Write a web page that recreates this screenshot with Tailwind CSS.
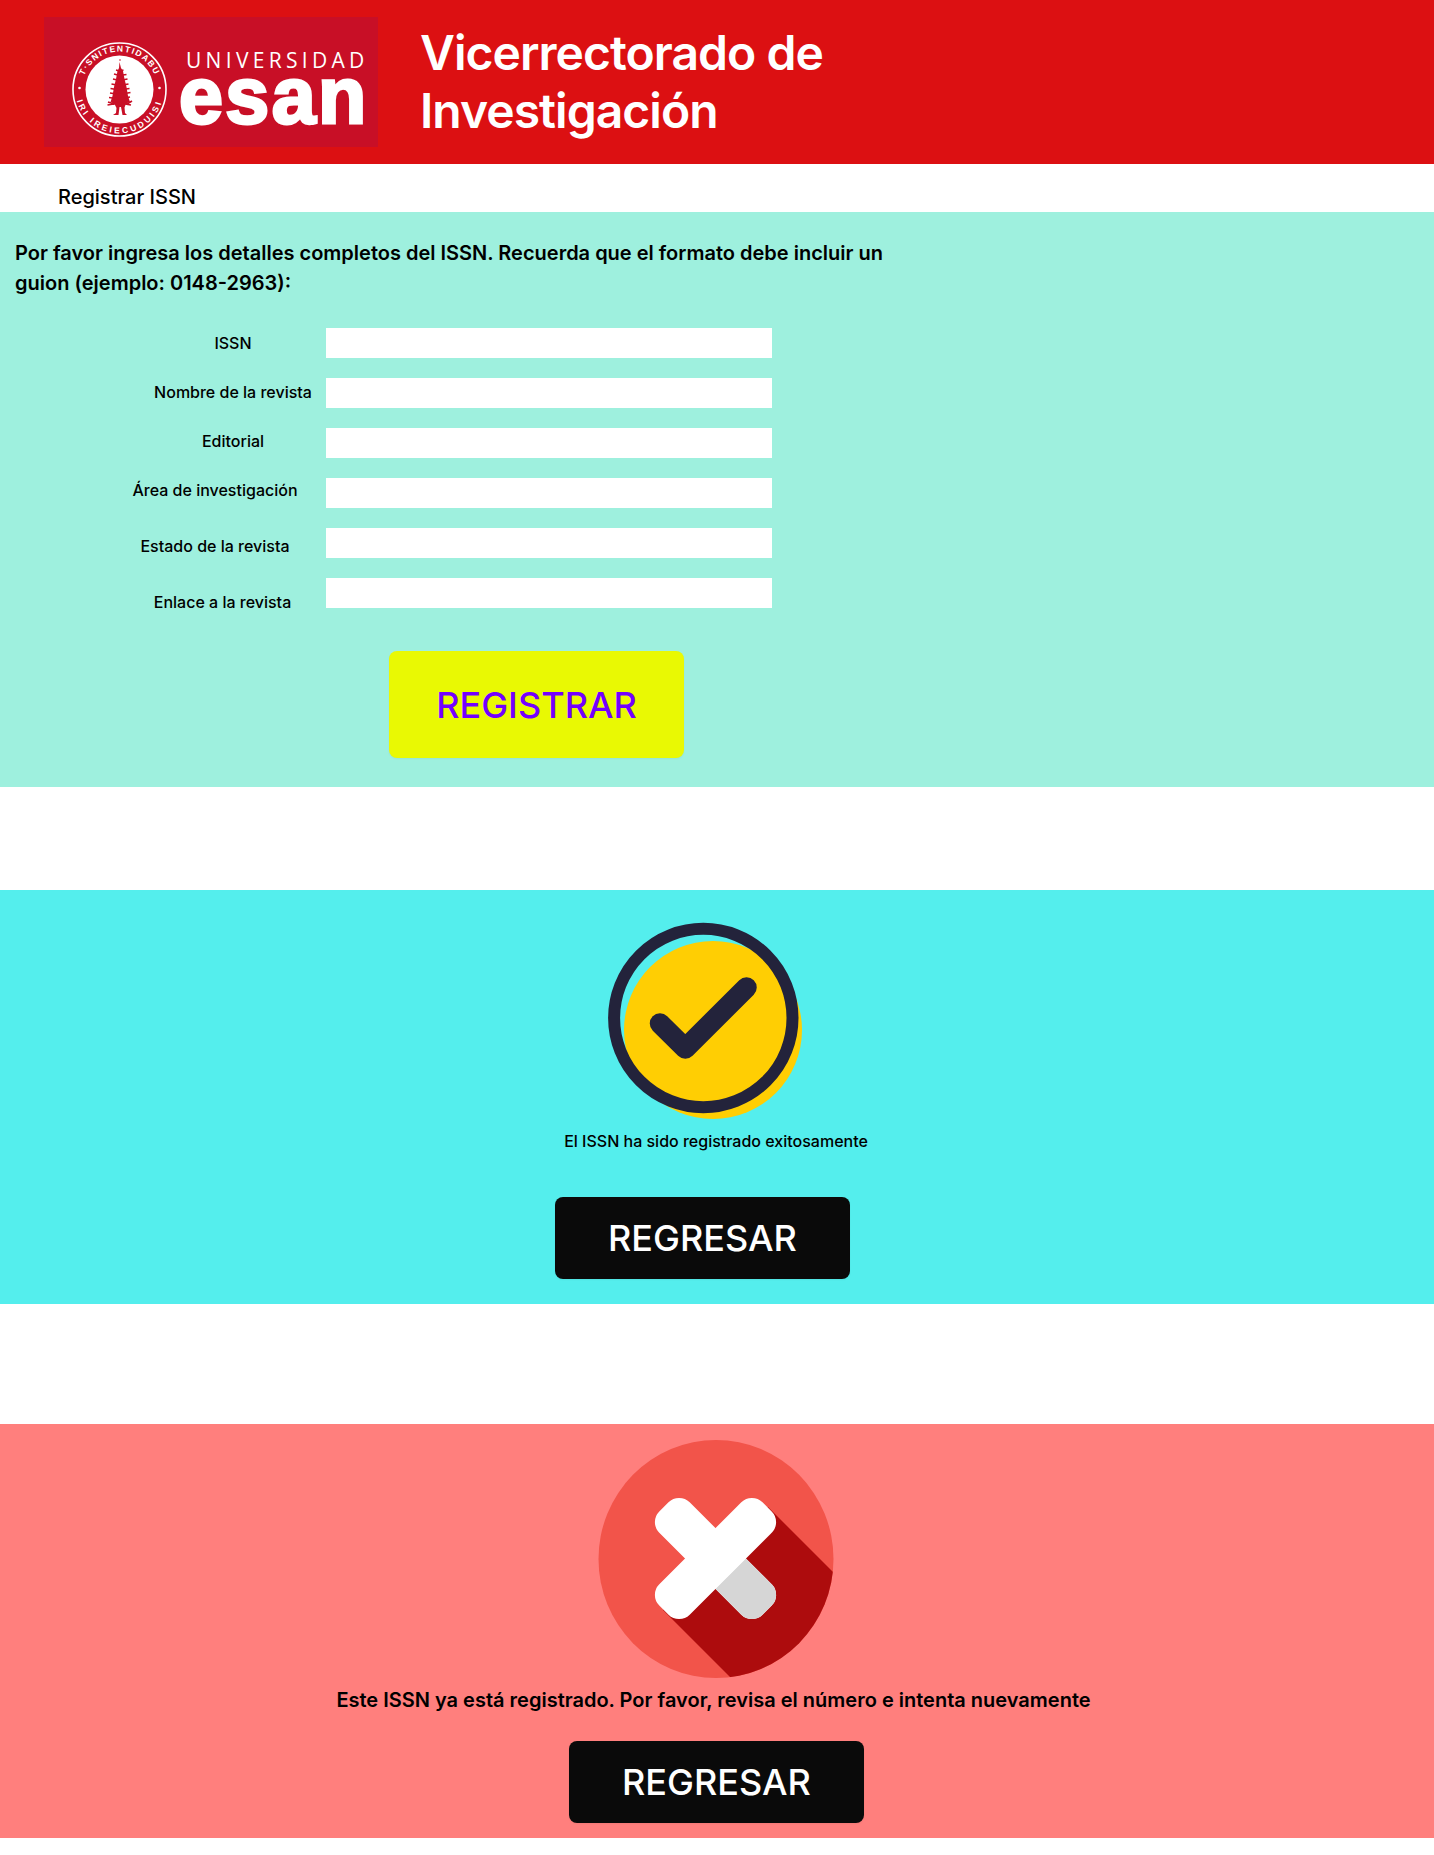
<!DOCTYPE html>
<html lang="es">
<head>
<meta charset="utf-8">
<meta name="viewport" content="width=device-width, initial-scale=1">
<title>Registrar ISSN</title>
<script src="https://cdn.jsdelivr.net/npm/@tailwindcss/browser@4"></script>
</head>
<body class="bg-white font-['Inter',sans-serif] font-medium text-black">
<header class="flex items-start bg-[#dc1012] pt-[17px] pb-[17px] pl-11">
  <svg class="h-[130px] w-[334px] shrink-0" viewBox="44 17 334 130" role="img" aria-label="Universidad ESAN">
    <defs>
      <path id="arc-top" d="M81.5 89.5A38 38 0 0 1 157.500 89.5"/>
      <path id="arc-bottom" d="M75.500 89.5A44 44 0 0 0 163.500 89.5"/>
    </defs>
    <rect x="44" y="17" width="334" height="130" fill="#c80f26"/>
    <circle cx="119.500" cy="89.500" r="46.500" fill="none" stroke="#fff" stroke-width="1.600"/>
    <circle cx="119.500" cy="89.500" r="34" fill="#fff"/>
    <g fill="#fff" font-family="'Liberation Sans',sans-serif" font-weight="700" font-size="8.500">
      <text letter-spacing="1.400"><textPath href="#arc-top" startOffset="50%" text-anchor="middle">T·SNITENTIDABU</textPath></text>
      <text letter-spacing="2.800"><textPath href="#arc-bottom" startOffset="50%" text-anchor="middle">IRI IREIECUDUISI</textPath></text>
    </g>
    <circle cx="79.500" cy="88" r="1.300" fill="#fff"/>
    <circle cx="159.500" cy="88" r="1.300" fill="#fff"/>
    <path fill="#c80f26" d="M119.500 62l1.500 6 2 3 1.500 8 2 8 1.500 9 2 6-4 1.500-1.500 4 .5 5.500 2 2h-4.500l-1.500-8h-1.500l-1 8h-5.500l3-2 .5-5-2-4-4-2 2-6 1.500-9 2-8 1.500-8 1.500-3z"/>
    <path fill="none" stroke="#c80f26" stroke-width="1.700" d="M116 70l3.500 1 4-1M114 74l5.500 1.500 7-1M113 79l6.500 1.500 8-1.500M111.500 84l8 1.500 9-1.500M110.500 88.500l9 1.500 10-1.500M110 93l9.500 1.500 11-2M109 97.500l10 1.500 11-2M108 102l6 2 3-2M132 101l-5 3-4-2M107.500 105l6-1M125 104l6 1"/>
    <circle cx="120" cy="60" r=".8" fill="#c80f26"/>
    <text x="186" y="68" fill="#fff" font-family="'Open Sans',sans-serif" font-weight="400" font-size="21" letter-spacing="4.300">UNIVERSIDAD</text>
    <text x="179" y="123" fill="#fff" stroke="#fff" stroke-width="3" font-family="'Liberation Sans',sans-serif" font-weight="700" font-size="79" letter-spacing="2.400">esan</text>
  </svg>
  <h1 class="mt-[7px] ml-[42px] w-[480px] text-5xl leading-[58px] font-semibold tracking-[-0.02em] text-white">Vicerrectorado de Investigación</h1>
</header>

<main>
  <h2 class="pt-[18px] pl-[58px] text-xl leading-[30px]">Registrar ISSN</h2>

  <form class="bg-[#9ef0de] pt-[26px] pb-[29px]">
    <p class="ml-[15px] max-w-[900px] text-xl leading-[30px] font-semibold">Por favor ingresa los detalles completos del ISSN. Recuerda que el formato debe incluir un guion (ejemplo: 0148-2963):</p>
    <div class="mt-[30px] flex pl-[120px]">
      <div class="w-[206px] shrink-0 pt-[3px] text-base leading-6 whitespace-nowrap">
        <div class="flex w-[226px] flex-col items-center gap-[25px]">
          <label for="issn">ISSN</label>
          <label for="nombre">Nombre de la revista</label>
          <label for="editorial">Editorial</label>
        </div>
        <div class="mt-[25px] flex w-[190px] flex-col items-center gap-8">
          <label for="area">Área de investigación</label>
          <label for="estado">Estado de la revista</label>
        </div>
        <div class="mt-8 flex w-[205px] flex-col items-center">
          <label for="enlace">Enlace a la revista</label>
        </div>
      </div>
      <div class="flex w-[446px] flex-col gap-5">
        <input id="issn" type="text" class="h-[30px] w-full bg-white px-2">
        <input id="nombre" type="text" class="h-[30px] w-full bg-white px-2">
        <input id="editorial" type="text" class="h-[30px] w-full bg-white px-2">
        <input id="area" type="text" class="h-[30px] w-full bg-white px-2">
        <input id="estado" type="text" class="h-[30px] w-full bg-white px-2">
        <input id="enlace" type="url" class="h-[30px] w-full bg-white px-2">
      </div>
    </div>
    <button type="submit" class="mt-[37px] ml-[389px] block h-[107px] w-[295px] rounded-lg bg-[#e9f903] text-4xl font-medium text-[#7300ff] shadow-xs">REGISTRAR</button>
  </form>

  <section class="mt-[103px] flex flex-col items-center bg-[#54eeed] pt-8 pb-[25px]">
    <svg class="mr-6 h-[198px] w-[196px]" viewBox="607 922 196 198" aria-hidden="true">
      <circle cx="713" cy="1030" r="89" fill="#ffce03"/>
      <circle cx="703.300" cy="1018" r="89.200" fill="none" stroke="#23233b" stroke-width="12"/>
      <path d="M660 1023.500l25.300 25L746.500 987.500" fill="none" stroke="#23233b" stroke-width="20.500" stroke-linecap="round" stroke-linejoin="round"/>
    </svg>
    <p class="mt-[9px] mr-0.5 text-base leading-6">El ISSN ha sido registrado exitosamente</p>
    <button type="button" class="mt-11 mr-[29px] h-[82px] w-[295px] rounded-lg bg-[#0a0a0a] text-4xl font-medium text-white shadow-xs">REGRESAR</button>
  </section>

  <section class="mt-[120px] mb-[17px] flex flex-col items-center bg-[#ff7f7d] pt-4 pb-[15px]">
    <svg class="mr-0.5 h-[238px] w-[236px]" viewBox="0 0 236 238" aria-hidden="true">
      <clipPath id="disc"><ellipse cx="118" cy="119" rx="117.500" ry="119"/></clipPath>
      <ellipse cx="118" cy="119" rx="117.500" ry="119" fill="#f2544a"/>
      <path clip-path="url(#disc)" fill="#ad0c0d" d="M170 67L250 147V250H145L65 170l50-54z"/>
      <g transform="translate(117.500 118.500)">
        <rect x="-73" y="-21.500" width="146" height="43" rx="15" transform="rotate(45)" fill="#fff"/>
        <path transform="rotate(45)" fill="#d6d6d6" d="M21-21.500H58a15 15 0 0 1 15 15V6.500a15 15 0 0 1-15 15H21z"/>
        <rect x="-73" y="-21.500" width="146" height="43" rx="15" transform="rotate(-45)" fill="#fff"/>
      </g>
    </svg>
    <p class="mt-[7px] mr-[7px] text-xl leading-[30px] font-semibold">Este ISSN ya está registrado. Por favor, revisa el número e intenta nuevamente</p>
    <button type="button" class="mt-[26px] mr-px h-[82px] w-[295px] rounded-lg bg-[#0a0a0a] text-4xl font-medium text-white shadow-xs">REGRESAR</button>
  </section>
</main>
</body>
</html>
